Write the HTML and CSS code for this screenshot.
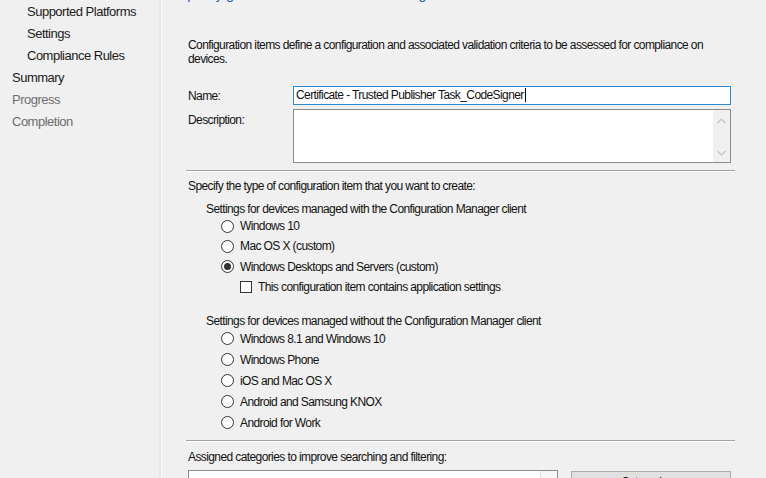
FILE: index.html
```html
<!DOCTYPE html>
<html>
<head>
<meta charset="utf-8">
<link rel="stylesheet" href="styles.css">
</head>
<body>
<div class="wizard">
  <nav class="nav">
    <div class="nav-item sub">Supported Platforms</div>
    <div class="nav-item sub">Settings</div>
    <div class="nav-item sub">Compliance Rules</div>
    <div class="nav-item">Summary</div>
    <div class="nav-item dim">Progress</div>
    <div class="nav-item dim">Completion</div>
  </nav>
  <main class="content">
    <h1 class="title">Specify general information for this configuration item</h1>
    <p class="intro">Configuration items define a configuration and associated validation criteria to be assessed for compliance on<br>devices.</p>
    <div class="field-row name-row">
      <label class="field-label">Name:</label>
      <div class="input focused">Certificate - Trusted Publisher Task_CodeSigner<span class="caret"></span></div>
    </div>
    <div class="field-row desc-row">
      <label class="field-label">Description:</label>
      <div class="textarea">
        <div class="vscroll">
          <svg width="9" height="6" viewBox="0 0 9 6"><path d="M0.5 5 L4.5 1 L8.5 5" fill="none" stroke="#c2c2c2" stroke-width="1.2"/></svg>
          <svg width="9" height="6" viewBox="0 0 9 6"><path d="M0.5 1 L4.5 5 L8.5 1" fill="none" stroke="#c2c2c2" stroke-width="1.2"/></svg>
        </div>
      </div>
    </div>
    <div class="sep sep1"></div>
    <p class="line specify">Specify the type of configuration item that you want to create:</p>
    <p class="line group-label g1">Settings for devices managed with the Configuration Manager client</p>
    <div class="options g1-opts">
      <div class="opt"><span class="radio"></span>Windows 10</div>
      <div class="opt"><span class="radio"></span>Mac OS X (custom)</div>
      <div class="opt"><span class="radio checked"></span>Windows Desktops and Servers (custom)</div>
      <div class="opt sub-opt"><span class="check"></span>This configuration item contains application settings</div>
    </div>
    <p class="line group-label g2">Settings for devices managed without the Configuration Manager client</p>
    <div class="options g2-opts">
      <div class="opt"><span class="radio"></span>Windows 8.1 and Windows 10</div>
      <div class="opt"><span class="radio"></span>Windows Phone</div>
      <div class="opt"><span class="radio"></span>iOS and Mac OS X</div>
      <div class="opt"><span class="radio"></span>Android and Samsung KNOX</div>
      <div class="opt"><span class="radio"></span>Android for Work</div>
    </div>
    <div class="sep sep2"></div>
    <p class="line assigned">Assigned categories to improve searching and filtering:</p>
    <div class="bottom-row">
      <div class="listbox"><div class="list-scroll"></div></div>
      <button class="btn">Categories...</button>
    </div>
  </main>
</div>
</body>
</html>
```
FILE: styles.css
```css
* { box-sizing: border-box; }
html, body { margin: 0; padding: 0; }
body {
  background: #f0f0f0;
  font-family: "Liberation Sans", Arial, sans-serif;
  font-size: 12px;
  color: #111;
  width: 766px;
  height: 478px;
  overflow: hidden;
}
.wizard {
  display: flex;
  height: 478px;
  overflow: hidden;
}
.nav {
  width: 162px;
  flex: none;
  border-right: 1px solid #fbfbfb;
  box-shadow: inset -2px 0 0 #e6e6e6;
  padding-top: 1px;
  font-size: 13px;
  letter-spacing: -0.5px;
}
.nav-item {
  height: 22px;
  line-height: 22px;
  padding-left: 12px;
  color: #1a1a1a;
  white-space: nowrap;
}
.nav-item.sub { padding-left: 27px; }
.nav-item.dim { color: #6d6d6d; }

.content {
  flex: 1;
  display: flex;
  flex-direction: column;
  padding-left: 26px;
  padding-right: 31px;
  letter-spacing: -0.6px;
}
.title {
  margin: -14px 0 0 -10px;
  height: 16px;
  line-height: 16px;
  font-size: 14px;
  font-weight: normal;
  color: #1d5aa8;
  letter-spacing: -0.2px;
  white-space: nowrap;
}
.intro {
  margin: 36px 0 0 0;
  line-height: 14px;
}
.field-row {
  display: flex;
  padding-right: 4px;
}
.field-label {
  width: 105px;
  flex: none;
}
.name-row { margin-top: 20px; align-items: center; }
.input {
  flex: 1;
  height: 19px;
  background: #fff;
  border: 1px solid #2a8ad4;
  line-height: 17px;
  padding-left: 2px;
  white-space: nowrap;
}
.caret {
  display: inline-block;
  width: 1px;
  height: 14px;
  background: #000;
  vertical-align: -3px;
  margin-left: 1px;
}
.desc-row { margin-top: 4px; }
.desc-row .field-label { padding-top: 4px; }
.textarea {
  flex: 1;
  height: 54px;
  background: #fff;
  border: 1px solid #8c8c8c;
  display: flex;
  justify-content: flex-end;
}
.vscroll {
  width: 17px;
  background: #f0f0f0;
  display: flex;
  flex-direction: column;
  justify-content: space-between;
  align-items: center;
  padding: 8px 0 6px;
}
.vscroll svg { display: block; }
.sep {
  height: 2px;
  border-top: 1px solid #a0a0a0;
  border-bottom: 1px solid #ffffff;
  margin-left: -2px;
}
.sep1 { margin-top: 7px; }
.line {
  margin: 0;
  line-height: 14px;
  white-space: nowrap;
}
.specify { margin-top: 7px; }
.group-label { padding-left: 18px; }
.g1 { margin-top: 9px; }
.options { display: flex; flex-direction: column; padding-left: 33px; }
.g1-opts .opt { height: 20.3px; }
.g2-opts .opt { height: 21px; }
.opt {
  display: flex;
  align-items: center;
  white-space: nowrap;
}
.radio {
  width: 13px;
  height: 13px;
  border: 1px solid #333;
  border-radius: 50%;
  background: #fff;
  margin-right: 6px;
  flex: none;
  display: flex;
  align-items: center;
  justify-content: center;
}
.radio.checked::after {
  content: "";
  width: 7px;
  height: 7px;
  border-radius: 50%;
  background: #333;
}
.sub-opt { padding-left: 19px; }
.check {
  width: 12px;
  height: 12px;
  border: 1px solid #333;
  background: #fff;
  margin-right: 6px;
  flex: none;
}
.g2 { margin-top: 17px; }
.sep2 { margin-top: 7px; }
.assigned { margin-top: 8px; }
.bottom-row {
  display: flex;
  margin-top: 6px;
  gap: 13px;
  padding-right: 4px;
}
.listbox {
  width: 370px;
  height: 40px;
  background: #fff;
  border: 1px solid #8c8c8c;
  display: flex;
  justify-content: flex-end;
}
.list-scroll {
  width: 17px;
  border-left: 1px solid #e0e0e0;
  background: #f7f7f7;
}
.btn {
  flex: 1;
  height: 23px;
  margin-top: 1px;
  background: #e1e1e1;
  border: 1px solid #adadad;
  font-family: inherit;
  font-size: 12px;
  letter-spacing: -0.6px;
  color: #111;
  padding: 3px 0 0;
  line-height: 14px;
  display: flex;
  justify-content: center;
  align-items: flex-start;
}
```
